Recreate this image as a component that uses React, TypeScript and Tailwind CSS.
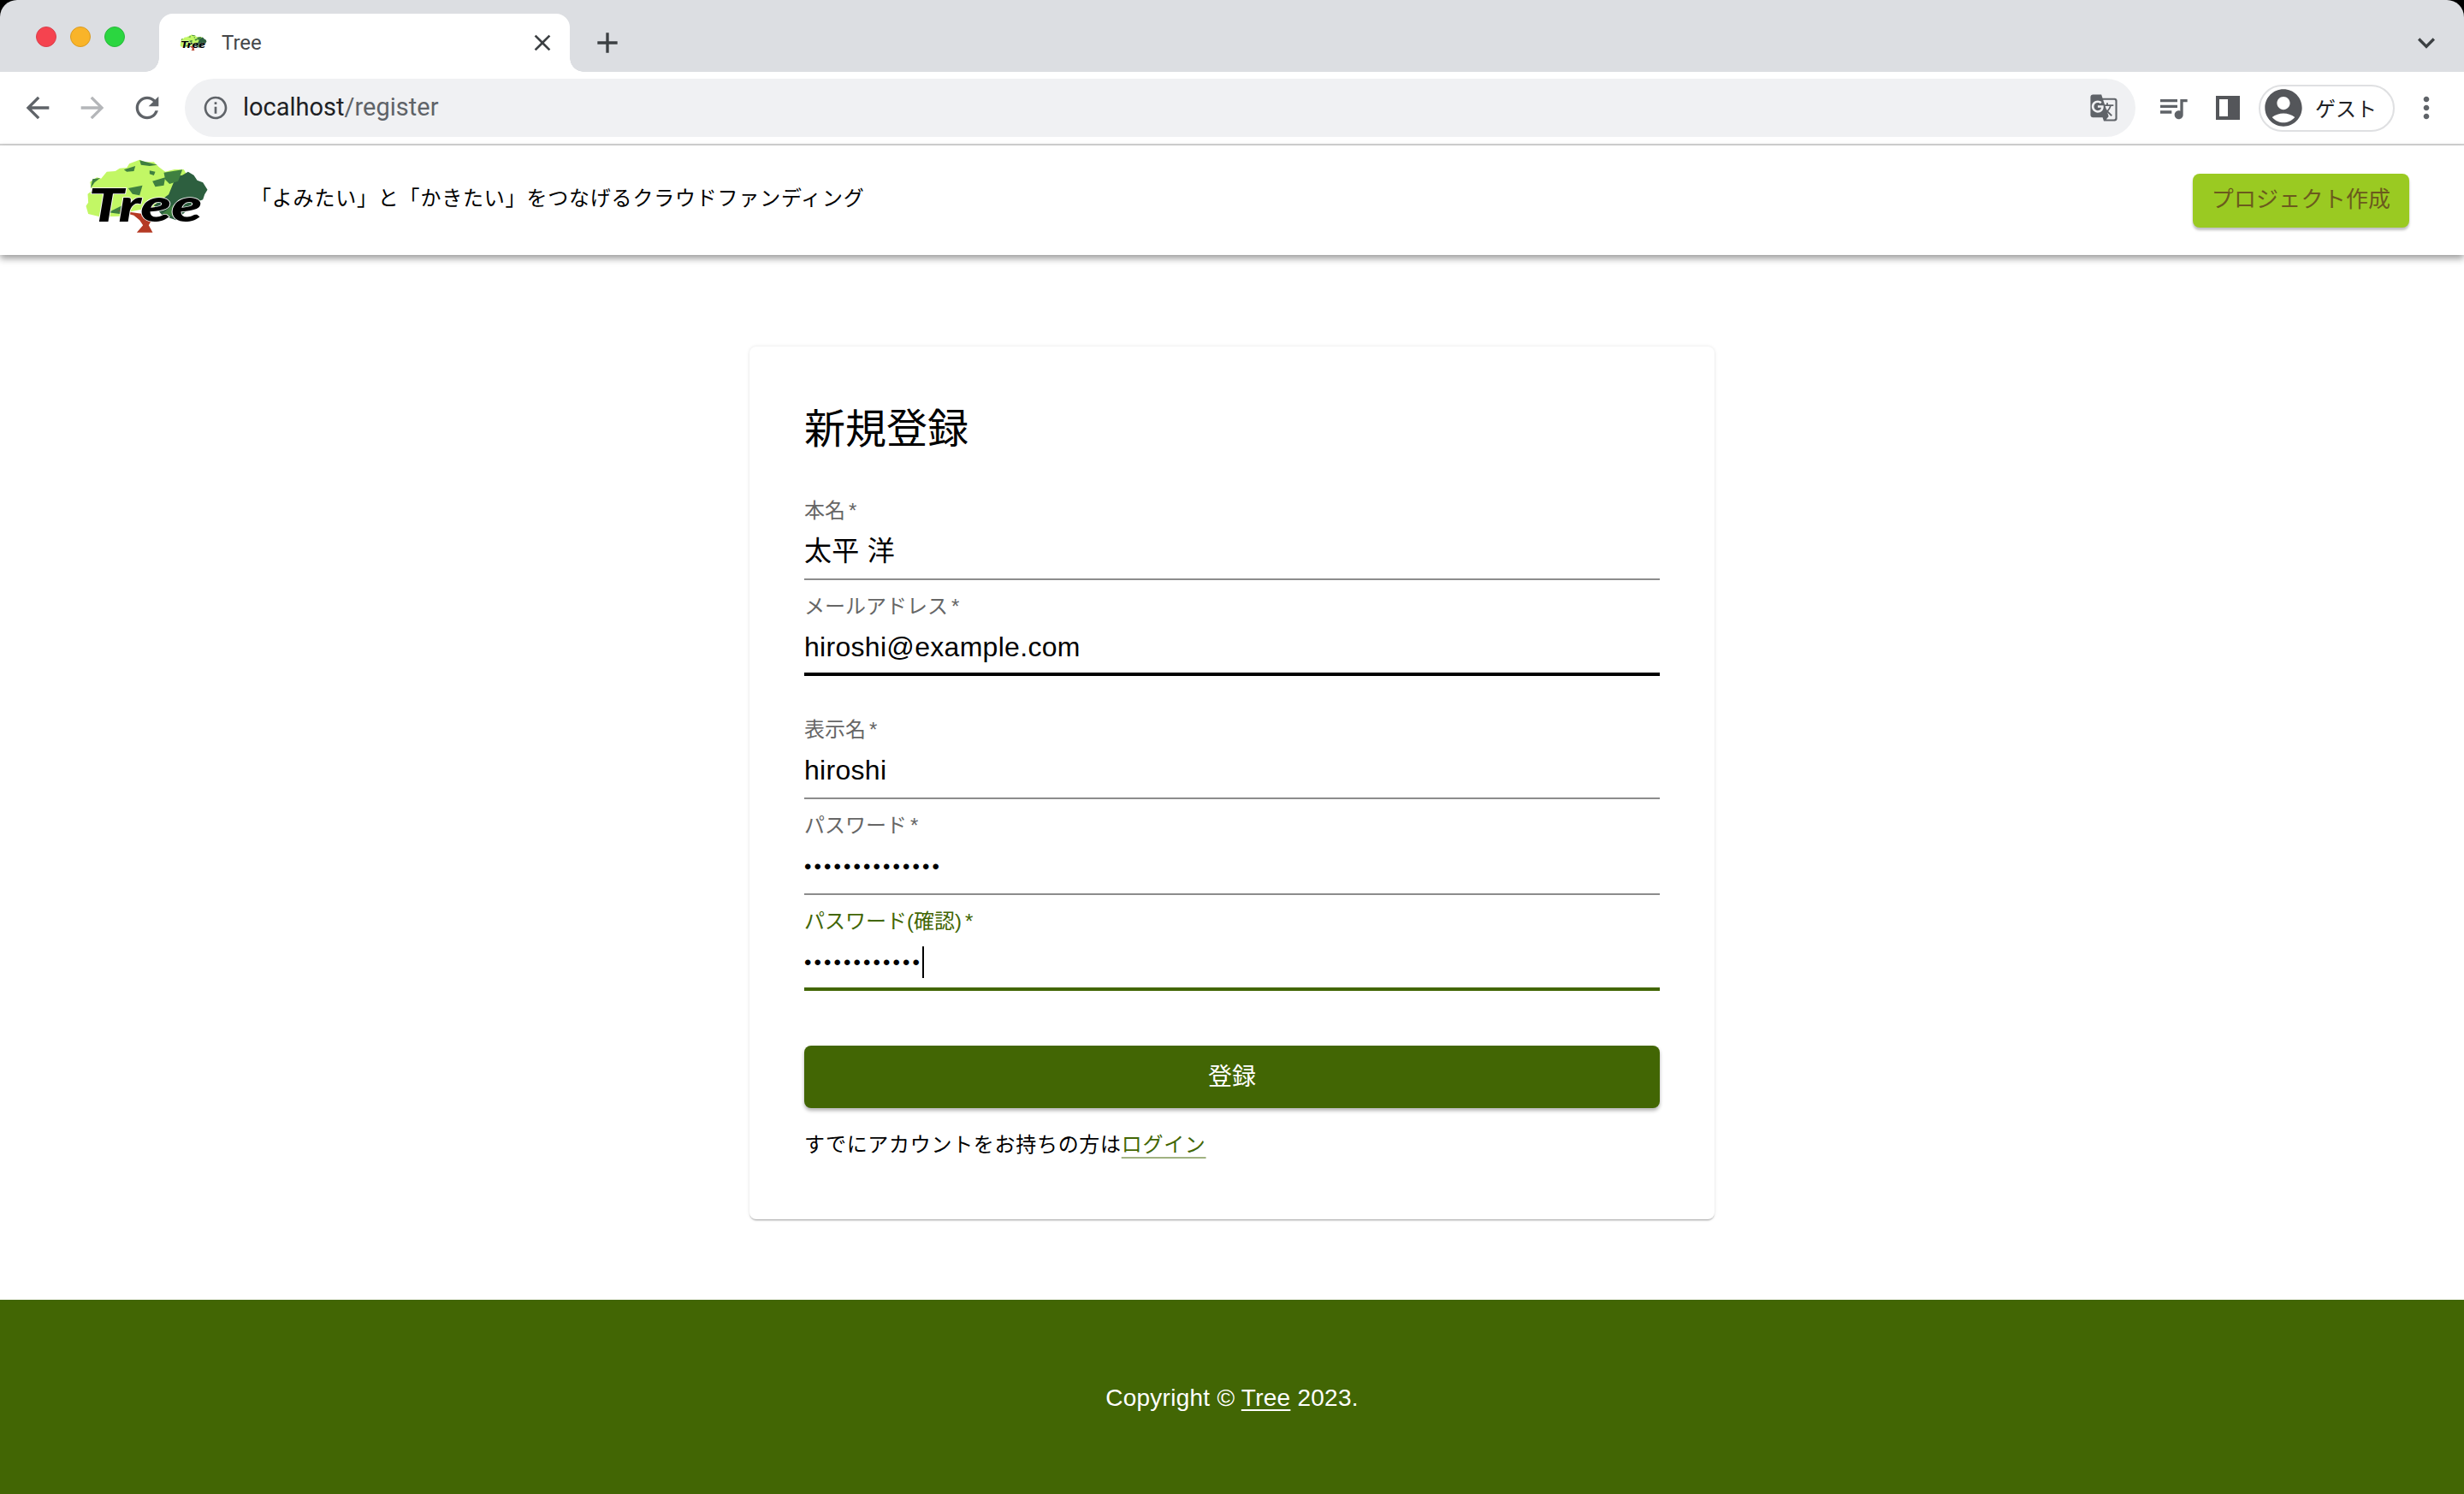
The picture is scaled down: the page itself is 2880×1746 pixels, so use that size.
import React from 'react';
import { MdAccountCircle, MdAdd, MdArrowBack, MdArrowForward, MdClose, MdExpandMore, MdGTranslate, MdInfoOutline, MdMoreVert, MdQueueMusic, MdRefresh } from 'react-icons/md';

const sans = 'font-["Liberation_Sans","Noto_Sans_CJK_JP",sans-serif]';

const Logo: React.FC<{ className: string }> = ({ className }) => (
  <svg viewBox="55 45 440 270" className={className}>
    <path d="M70 240 L62 212 L70 200 L68 170 L82 160 L76 128 L100 112 L115 116 L135 92 L165 90 L180 80 L205 78 L214 64 L250 50 L268 58 L300 58 L318 76 L340 92 L372 84 L405 84 L420 110 L380 150 L350 180 L300 215 L220 232 L180 248 L110 250 Z" fill="#c2f765" />
    <path d="M352 172 L378 108 L400 104 L420 92 L440 104 L452 122 L472 130 L488 155 L478 172 L472 190 L445 200 L430 215 L378 262 L330 245 L300 210 Z" fill="#2d5f3f" />
    <path d="M335 95 L400 85 L385 125 L355 135 L340 120 Z M295 125 L340 112 L335 140 L305 145 Z M285 88 L305 92 L300 105 L285 100 Z M195 85 L235 72 L230 90 L205 92 Z M250 52 L312 68 L285 72 L255 68 Z M85 118 L112 114 L92 130 L78 150 Z M210 150 L260 140 L250 175 L225 170 Z M140 235 L200 205 L225 210 L180 240 Z M330 240 L365 210 L385 205 L370 250 Z" fill="#3f8040" />
    <path d="M240 305 L262 280 L250 262 L230 245 L170 228 L225 235 L262 240 L270 215 L284 220 L290 265 L282 280 L296 305 Z" fill="#b53a24" />
    <text x="70" y="268" fontSize="160" fontStyle="italic" fontWeight="900" fontFamily="Lato" textLength="400" lengthAdjust="spacingAndGlyphs" fill="#000" stroke="#fff" strokeWidth="4" paintOrder="stroke">
      Tree
    </text>
  </svg>
);

interface FieldProps {
  label: string;
  lineClass: string;
  labelClass?: string;
  className?: string;
  children: React.ReactNode;
}

const Field: React.FC<FieldProps> = ({ label, lineClass, labelClass = 'text-[#666666]', className = '', children }) => (
  <div className={`flex h-[112px] flex-col justify-end ${className}`}>
    <div className={`h-[30px] text-[24px] leading-[30px] ${labelClass}`}>
      {label}
      <span className="ml-[4px]">*</span>
    </div>
    <div className="flex h-[64px] items-center text-[32px] leading-[37px] tracking-[0.3px] text-black">{children}</div>
    <div className={lineClass} />
  </div>
);

const Dots: React.FC<{ value: string }> = ({ value }) => <span className="text-[24px] tracking-[3.1px]">{value}</span>;

const grayLine = 'h-[2px] bg-[#8c8c8c]';

export default function App() {
  return (
    <div className={`flex h-[1746px] flex-col overflow-hidden bg-black ${sans}`}>
      {/* browser chrome */}
      <div className="flex h-[84px] shrink-0 items-end rounded-t-[20px] bg-[#dcdee2] pl-[42px] pr-[24px]">
        <div className="mb-[29px] flex gap-[16px]">
          <span className="h-[24px] w-[24px] rounded-full border border-[#d9404c] bg-[#f5434f]" />
          <span className="h-[24px] w-[24px] rounded-full border border-[#d99b22] bg-[#f9b429]" />
          <span className="h-[24px] w-[24px] rounded-full border border-[#28b83a] bg-[#2bd640]" />
        </div>
        <div className="relative ml-[40px] flex h-[68px] w-[480px] items-center rounded-t-[16px] bg-white pl-[24px] pr-[16px]">
          <span className="absolute -left-[16px] bottom-0 h-[16px] w-[16px] bg-[radial-gradient(circle_at_0_0,transparent_15.5px,white_16px)]" />
          <span className="absolute -right-[16px] bottom-0 h-[16px] w-[16px] bg-[radial-gradient(circle_at_100%_0,transparent_15.5px,white_16px)]" />
          <Logo className="h-[20px] w-[32px]" />
          <span className="ml-[17px] flex-1 font-['Roboto',sans-serif] text-[24px] text-[#45474a]">Tree</span>
          <MdClose className="text-[32px] text-[#3c4043]" />
        </div>
        <MdAdd className="mb-[14px] ml-[24px] text-[40px] text-[#3c4043]" />
        <div className="flex-1" />
        <MdExpandMore className="mb-[14px] text-[40px] text-[#3c4043]" />
      </div>
      <div className="flex h-[84px] shrink-0 items-center gap-[24px] bg-white pl-[24px] pr-[24px]">
        <MdArrowBack className="text-[40px] text-[#5f6368]" />
        <MdArrowForward className="text-[40px] text-[#b4b6b9]" />
        <MdRefresh className="text-[40px] text-[#5f6368]" />
        <div className="flex h-[68px] flex-1 items-center rounded-full bg-[#f0f1f3] pl-[20px] pr-[20px]">
          <MdInfoOutline className="text-[32px] text-[#5f6368]" />
          <span className="ml-[16px] flex-1 font-['Roboto',sans-serif] text-[29px] text-[#202124]">
            localhost<span className="text-[#5f6368]">/register</span>
          </span>
          <MdGTranslate className="text-[34px] text-[#5f6368]" />
        </div>
        <MdQueueMusic className="text-[40px] text-[#5f6368]" />
        <div className="ml-[6px] flex h-[28px] w-[28px] justify-end border-[4px] border-[#54565a] bg-white">
          <span className="w-[10px] bg-[#54565a]" />
        </div>
        <div className="-ml-[2px] flex h-[55px] w-[159px] items-center rounded-full border-2 border-[#dfe0e2] pl-[1px]">
          <MdAccountCircle className="text-[52px] text-[#54565a]" />
          <span className="ml-[11px] font-['Noto_Sans_CJK_JP',sans-serif] text-[24px] text-[#202124]">ゲスト</span>
        </div>
        <MdMoreVert className="-ml-[7px] text-[40px] text-[#5f6368]" />
      </div>
      <div className="h-[2px] shrink-0 bg-[#d5d5d5]" />

      {/* page */}
      <div className="flex flex-1 flex-col bg-white">
        <header className="z-10 flex h-[128px] shrink-0 items-center bg-white pl-[98px] pr-[64px] shadow-[0_4px_8px_rgba(0,0,0,0.4)]">
          <Logo className="mb-[8px] h-[90px] w-[147px]" />
          <p className="mb-[4px] ml-[48px] flex-1 text-[24px] tracking-[0.8px] text-black">「よみたい」と「かきたい」をつなげるクラウドファンディング</p>
          <button className="h-[63px] w-[253px] rounded-[8px] bg-[#9aca22] pb-[2px] text-[26px] tracking-[0.2px] text-[#6b5a1d] shadow-[0_3px_3px_rgba(0,0,0,0.25)]">
            プロジェクト作成
          </button>
        </header>

        <main className="flex flex-1 flex-col items-center pt-[107px]">
          <div className="h-[1020px] w-[1128px] rounded-[8px] bg-white px-[64px] shadow-[0_2px_2px_-1px_rgba(0,0,0,0.35),0_0_4px_rgba(0,0,0,0.1)]">
            <h1 className="mt-[67px] text-[48px] leading-[60px] text-black">新規登録</h1>
            <div className="mt-[34px]">
              <Field label="本名" lineClass={grayLine}>
                太平 洋
              </Field>
              <Field label="メールアドレス" lineClass="-mt-[2px] h-[4px] bg-black">
                hiroshi@example.com
              </Field>
              <Field label="表示名" lineClass={grayLine} className="mt-[32px]">
                hiroshi
              </Field>
              <Field label="パスワード" lineClass={grayLine}>
                <Dots value="••••••••••••••" />
              </Field>
              <Field label="パスワード(確認)" lineClass="-mt-[2px] h-[4px] bg-[#426604]" labelClass="text-[#426604]">
                <Dots value="••••••••••••" />
                <span className="inline-block h-[37px] w-[2px] bg-black" />
              </Field>
            </div>
            <button className="mt-[64px] h-[73px] w-full rounded-[8px] bg-[#426604] text-[28px] text-white shadow-[0_3px_4px_rgba(0,0,0,0.3)]">
              登録
            </button>
            <p className="mt-[27px] text-[24px] leading-[32px] tracking-[0.7px] text-black">
              すでにアカウントをお持ちの方は
              <a className="text-[#426604] underline decoration-[#42660480] underline-offset-[6px]">ログイン</a>
            </p>
          </div>
        </main>

        <footer className="flex h-[227px] shrink-0 items-center justify-center bg-[#426604] pt-[2px] text-[28px] tracking-[0.26px] text-white">
          <p>
            Copyright © <a className="underline underline-offset-[4px]">Tree</a> 2023.
          </p>
        </footer>
      </div>
    </div>
  );
}
